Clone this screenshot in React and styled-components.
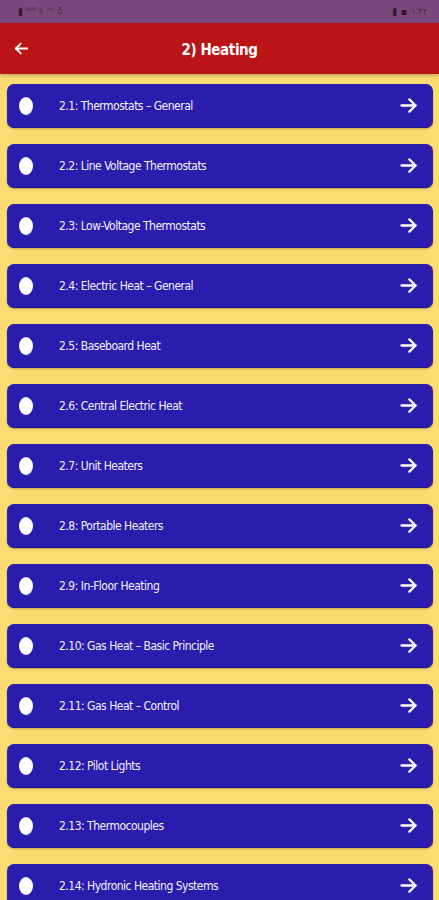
import styled, { createGlobalStyle } from 'styled-components';

const topics = [
    '2.1: Thermostats – General',
    '2.2: Line Voltage Thermostats',
    '2.3: Low-Voltage Thermostats',
    '2.4: Electric Heat – General',
    '2.5: Baseboard Heat',
    '2.6: Central Electric Heat',
    '2.7: Unit Heaters',
    '2.8: Portable Heaters',
    '2.9: In-Floor Heating',
    '2.10: Gas Heat – Basic Principle',
    '2.11: Gas Heat – Control',
    '2.12: Pilot Lights',
    '2.13: Thermocouples',
    '2.14: Hydronic Heating Systems',
]

const Arrow = ({ dir = 'right', size = 18 }) => (
    <svg width={size} height={size} viewBox="0 0 24 24" fill="none" stroke="#fff"
        strokeWidth="2.6" strokeLinecap="round" strokeLinejoin="round"
        style={dir === 'left' ? { transform: 'scaleX(-1)' } : undefined}>
        <path d="M4 12h16" />
        <path d="M13 5l7 7-7 7" />
    </svg>
)

const App = () => {
    return (
        <Page>
            <GlobalStyle />
            <StatusBar>
                <StatusLeft>
                    <Glyph>▮</Glyph>
                    <Tiny>ᵂᴬᴵ</Tiny>
                    <Tiny>lı</Tiny>
                    <Tiny>◠</Tiny>
                    <Tiny>♁</Tiny>
                </StatusLeft>
                <StatusRight>
                    <Glyph>▮</Glyph>
                    <Glyph>▪</Glyph>
                    <Tiny>۱:۲۲</Tiny>
                </StatusRight>
            </StatusBar>
            <Header>
                <BackBtn><Arrow dir="left" size={17} /></BackBtn>
                <Title>2) Heating</Title>
            </Header>
            <List>
                {topics.map(t => (
                    <Card key={t}>
                        <Dot />
                        <Label>{t}</Label>
                        <Arrow size={21} />
                    </Card>
                ))}
            </List>
        </Page>
    )
}

export default App;

const GlobalStyle = createGlobalStyle`
    body {
        margin: 0;
        background: #fcdb70;
        font-family: "DejaVu Sans Condensed", "DejaVu Sans", sans-serif;
        font-stretch: condensed;
    }
`

const Page = styled.div`
    width: 439px;
    height: 900px;
    overflow: hidden;
    background: #fcdb70;
`

const StatusBar = styled.div`
    height: 23px;
    background: #7a497c;
    display: flex;
    align-items: center;
    justify-content: space-between;
    padding: 0 12px 0 18px;
    color: #2d1a30;
`

const StatusLeft = styled.div`
    display: flex;
    align-items: center;
    gap: 3px;
`

const StatusRight = styled.div`
    display: flex;
    align-items: center;
    gap: 4px;
`

const Glyph = styled.span`
    font-size: 10px;
    line-height: 1;
`

const Tiny = styled.span`
    font-size: 9px;
    line-height: 1;
    color: #3a2a3c;
`

const Header = styled.div`
    height: 51px;
    background: #bb1414;
    display: flex;
    align-items: center;
    box-shadow: 0 2px 3px rgba(0, 0, 0, 0.2);
`

const BackBtn = styled.div`
    width: 42px;
    display: flex;
    justify-content: center;
    align-items: center;
`

const Title = styled.div`
    flex: 1;
    text-align: center;
    margin-right: 42px;
    padding-top: 2px;
    color: #fff;
    font-weight: bold;
    font-size: 15px;
    letter-spacing: -0.4px;
`

const List = styled.div`
    display: flex;
    flex-direction: column;
    gap: 16px;
    padding: 10px 6px 0 7px;
`

const Card = styled.div`
    height: 44px;
    flex-shrink: 0;
    background: #2a1dae;
    border-radius: 7px;
    border-bottom: 1px solid #1d1480;
    box-shadow: 0 1px 2px rgba(0, 0, 0, 0.25);
    display: flex;
    align-items: center;
    padding: 0 14px 0 12px;
    box-sizing: border-box;
`

const Dot = styled.div`
    width: 14px;
    height: 18px;
    border-radius: 50%;
    background: #fff;
    flex-shrink: 0;
`

const Label = styled.div`
    flex: 1;
    margin-left: 26px;
    color: #f4f2ff;
    font-size: 12px;
    letter-spacing: -0.5px;
`
